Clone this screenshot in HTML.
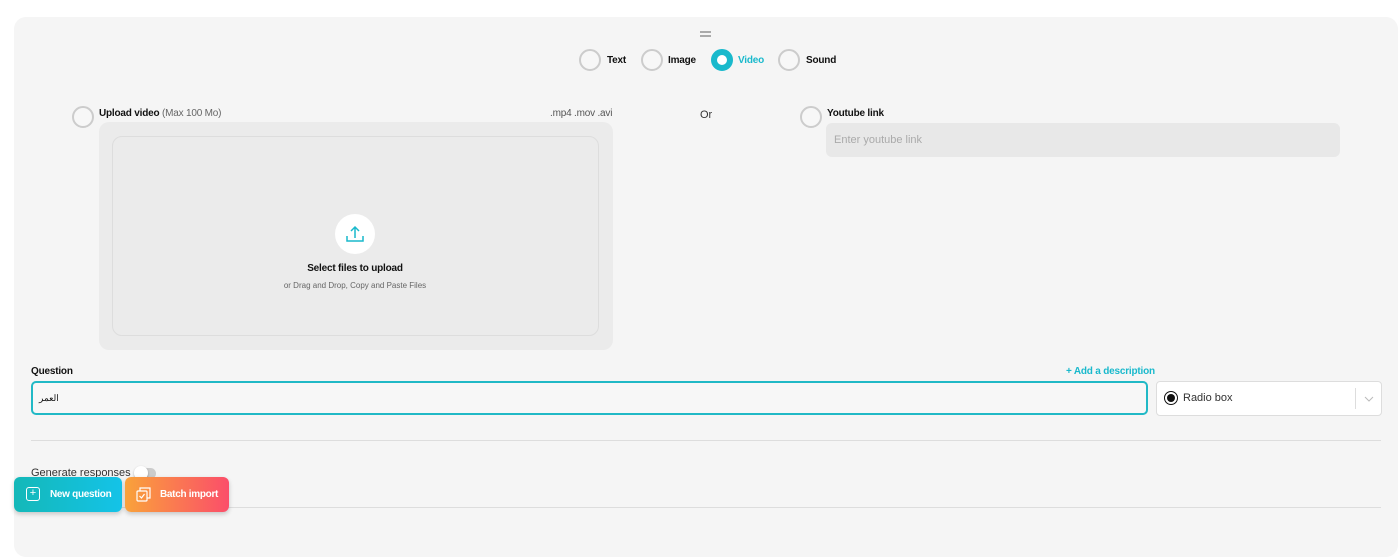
<!DOCTYPE html>
<html><head><meta charset="utf-8"><style>
*{box-sizing:border-box;margin:0;padding:0}
body{width:1400px;height:525px;background:#fff;font-family:"Liberation Sans","Noto Sans CJK SC",sans-serif;position:relative;overflow:hidden;color:#111}
.card{position:absolute;left:14px;top:17px;width:1384px;height:540px;background:#f5f5f5;border-radius:12px}
.a{position:absolute}
.rad{position:absolute;width:22px;height:22px;border:2px solid #ccc;border-radius:50%;background:#f7f7f7}
.lbl{font-size:10px;font-weight:bold;letter-spacing:-0.2px}
</style></head><body>
<div class="card"></div>
<div class="a" style="left:700px;top:31px;width:11px;height:1.5px;background:#aaa"></div>
<div class="a" style="left:700px;top:35px;width:11px;height:1.5px;background:#aaa"></div>

<div class="rad" style="left:579px;top:49px"></div><div class="a lbl" style="left:607px;top:55px">Text</div>
<div class="rad" style="left:641px;top:49px"></div><div class="a lbl" style="left:668px;top:55px">Image</div>
<div class="a" style="left:711px;top:49px;width:22px;height:22px;border-radius:50%;border:6px solid #19b9cc;background:#fff"></div><div class="a lbl" style="left:738px;top:55px;color:#19b9cc">Video</div>
<div class="rad" style="left:778px;top:49px"></div><div class="a lbl" style="left:806px;top:55px">Sound</div>

<div class="rad" style="left:72px;top:106px"></div>
<div class="a" style="left:99px;top:108px;font-size:10px;letter-spacing:-0.2px"><b>Upload video</b> <span style="color:#666">(Max 100 Mo)</span></div>
<div class="a" style="left:550px;top:108px;font-size:10px;color:#555;letter-spacing:-0.2px">.mp4 .mov .avi</div>
<div class="a" style="left:99px;top:122px;width:514px;height:228px;background:#ebebeb;border-radius:10px"></div>
<div class="a" style="left:112px;top:136px;width:487px;height:200px;border:1px solid #ddd;border-radius:10px"></div>
<div class="a" style="left:335px;top:214px;width:40px;height:40px;border-radius:50%;background:#fff"></div>
<svg class="a" style="left:345px;top:224px" width="20" height="20" viewBox="0 0 20 20" fill="none" stroke="#19b9cc" stroke-width="1.5"><path d="M10 14V3M6 7l4-4 4 4M2 12v5h16v-5"/></svg>
<div class="a" style="left:0;width:710px;top:263px;text-align:center;font-size:10px;font-weight:bold;letter-spacing:-0.2px">Select files to upload</div>
<div class="a" style="left:0;width:710px;top:281px;text-align:center;font-size:8px;color:#666">or Drag and Drop, Copy and Paste Files</div>

<div class="a" style="left:700px;top:109px;font-size:11px;color:#333">Or</div>
<div class="rad" style="left:800px;top:106px"></div>
<div class="a lbl" style="left:827px;top:108px">Youtube link</div>
<div class="a" style="left:826px;top:123px;width:514px;height:34px;background:#e8e8e8;border-radius:6px;font-size:11px;color:#aaa;padding:11px 8px">Enter youtube link</div>

<div class="a lbl" style="left:31px;top:366px">Question</div>
<div class="a lbl" style="left:1066px;top:366px;color:#19b9cc">+ Add a description</div>
<div class="a" style="left:31px;top:381px;width:1117px;height:34px;border:2px solid #21b9c6;border-radius:5px;background:#f7f7f7;font-size:9px;padding:10px 6px">العمر</div>
<div class="a" style="left:1156px;top:381px;width:226px;height:35px;border:1px solid #ddd;border-radius:4px;background:#fff"></div>
<div class="a" style="left:1164px;top:391px;width:14px;height:14px;border:1.5px solid #111;border-radius:50%"></div>
<div class="a" style="left:1167px;top:394px;width:8px;height:8px;background:#111;border-radius:50%"></div>
<div class="a" style="left:1183px;top:392px;font-size:11px;color:#333">Radio box</div>
<div class="a" style="left:1355px;top:388px;width:1px;height:21px;background:#ddd"></div>
<svg class="a" style="left:1364px;top:395px" width="10" height="8" viewBox="0 0 10 8"><path d="M1 2l4 4 4-4" fill="none" stroke="#bbb"/></svg>

<div class="a" style="left:31px;top:440px;width:1350px;height:1px;background:#ddd"></div>
<div class="a" style="left:31px;top:467px;font-size:11px;color:#333">Generate responses</div>
<div class="a" style="left:135px;top:468px;width:21px;height:11px;background:#ccc;border-radius:6px"></div>
<div class="a" style="left:134px;top:466px;width:14px;height:14px;background:#fff;border-radius:50%;box-shadow:0 1px 2px rgba(0,0,0,.3)"></div>
<div class="a" style="left:31px;top:507px;width:1350px;height:1px;background:#ddd"></div>

<div class="a" style="left:14px;top:477px;width:108px;height:35px;border-radius:6px;background:linear-gradient(90deg,#14b8b8,#14c3e8);box-shadow:0 2px 5px rgba(0,0,0,.2)"></div>
<div class="a" style="left:26px;top:487px;width:14px;height:14px;border:1.3px solid #fff;border-radius:3px;color:#fff;font-size:11px;line-height:11px;text-align:center">+</div>
<div class="a" style="left:50px;top:489px;font-size:10px;font-weight:bold;color:#fff;letter-spacing:-0.3px">New question</div>
<div class="a" style="left:125px;top:477px;width:104px;height:35px;border-radius:6px;background:linear-gradient(90deg,#f9a23a,#fb4e6a);box-shadow:0 2px 5px rgba(0,0,0,.2)"></div>
<svg class="a" style="left:136px;top:487px" width="15" height="15" viewBox="0 0 15 15" fill="none" stroke="#fff" stroke-width="1.2"><rect x="1" y="4" width="10" height="10" rx="1"/><path d="M4 4V1h10v10h-3M3.5 9l2 2 3-4"/></svg>
<div class="a" style="left:160px;top:489px;font-size:10px;font-weight:bold;color:#fff;letter-spacing:-0.3px">Batch import</div>
</body></html>
